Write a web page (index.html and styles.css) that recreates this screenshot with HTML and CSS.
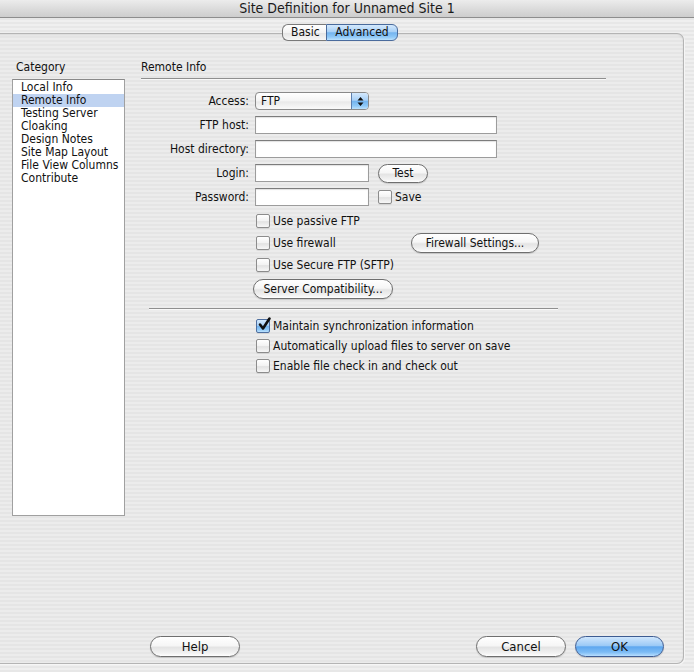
FILE: index.html
```html
<!DOCTYPE html>
<html>
<head>
<meta charset="utf-8">
<title>Site Definition for Unnamed Site 1</title>
<link rel="stylesheet" href="styles.css">
</head>
<body>
<div class="window">
  <div class="titlebar">Site Definition for Unnamed Site 1</div>
  <div class="tabs">
    <span class="tab tab-left">Basic</span><span class="tab tab-right selected">Advanced</span>
  </div>
  <div class="group">
    <div class="columns">
      <div class="left-col">
        <div class="col-label">Category</div>
        <ul class="list">
          <li>Local Info</li>
          <li class="sel">Remote Info</li>
          <li>Testing Server</li>
          <li>Cloaking</li>
          <li>Design Notes</li>
          <li>Site Map Layout</li>
          <li>File View Columns</li>
          <li>Contribute</li>
        </ul>
      </div>
      <div class="right-col">
        <div class="heading">Remote Info</div>
        <div class="sep sep-head"></div>

        <div class="row">
          <span class="lbl">Access:</span>
          <div class="popup"><span class="popup-text">FTP</span><span class="stepper"><svg width="7" height="11" viewBox="0 0 7 11"><path d="M3.5 1 L6.5 4.5 L0.5 4.5 Z M3.5 10 L0.5 6.5 L6.5 6.5 Z" fill="#111"/></svg></span></div>
        </div>
        <div class="row">
          <span class="lbl">FTP host:</span>
          <input class="field wide" type="text">
        </div>
        <div class="row">
          <span class="lbl">Host directory:</span>
          <input class="field wide" type="text">
        </div>
        <div class="row">
          <span class="lbl">Login:</span>
          <input class="field narrow" type="text">
          <span class="btn btn-test">Test</span>
        </div>
        <div class="row">
          <span class="lbl">Password:</span>
          <input class="field narrow" type="password">
          <span class="chk chk-save"></span><span class="chk-text">Save</span>
        </div>

        <div class="opts">
          <div class="opt"><span class="chk"></span><span class="chk-text">Use passive FTP</span></div>
          <div class="opt"><span class="chk"></span><span class="chk-text opt-fixed">Use firewall</span><span class="btn btn-firewall">Firewall Settings...</span></div>
          <div class="opt"><span class="chk"></span><span class="chk-text">Use Secure FTP (SFTP)</span></div>
        </div>
        <span class="btn btn-compat">Server Compatibility...</span>

        <div class="sep sep-mid"></div>

        <div class="sync">
          <div class="sync-opt"><span class="chk checked"><svg width="14" height="14" viewBox="0 0 14 14"><path d="M3 6.5 L6 10.5 L12.5 0.5" fill="none" stroke="#101010" stroke-width="2.6" stroke-linecap="round" stroke-linejoin="round"/></svg></span><span class="chk-text">Maintain synchronization information</span></div>
          <div class="sync-opt"><span class="chk"></span><span class="chk-text">Automatically upload files to server on save</span></div>
          <div class="sync-opt"><span class="chk"></span><span class="chk-text">Enable file check in and check out</span></div>
        </div>
      </div>
    </div>
    <div class="footer">
      <span class="btn btn-big">Help</span>
      <span class="footer-right">
        <span class="btn btn-big">Cancel</span>
        <span class="btn btn-big btn-default">OK</span>
      </span>
    </div>
  </div>
</div>
</body>
</html>
```
FILE: styles.css
```css
html, body {
  margin: 0;
  padding: 0;
}
body {
  width: 694px;
  height: 672px;
  overflow: hidden;
  font-family: "DejaVu Sans Condensed", "DejaVu Sans", sans-serif;
  font-size: 12px;
  color: #111;
  background: repeating-linear-gradient(to bottom, #efefef 0, #efefef 2px, #e7e7e7 2px, #e7e7e7 4px);
}
.window {
  display: flex;
  flex-direction: column;
  height: 672px;
}
.titlebar {
  height: 17px;
  line-height: 16px;
  text-align: center;
  font-size: 14px;
  color: #1a1a1a;
  background: linear-gradient(to bottom, #ececec, #d9d9d9 60%, #cdcdcd);
  border-bottom: 1px solid #8d8d8d;
}
.tabs {
  position: relative;
  z-index: 2;
  display: flex;
  justify-content: center;
  margin: 6px 0 -8px -4px;
  width: 688px;
}
.tab {
  height: 15px;
  line-height: 15px;
  padding: 0 8px;
  border: 1px solid #7a7a7a;
  font-size: 12px;
}
.tab-left {
  width: 27px;
  border-right: none;
  border-radius: 6px 0 0 6px;
  background: linear-gradient(to bottom, #ffffff, #f3f3f3 50%, #e4e4e4 52%, #f6f6f6);
  text-align: center;
}
.tab-right {
  width: 54px;
  border-radius: 0 6px 6px 0;
  text-align: center;
}
.tab.selected {
  border-color: #4a6b9c;
  background: linear-gradient(to bottom, #d4e9fd, #a8d0f6 45%, #74b4ef 52%, #8ec8f7 80%, #bde2fe);
}
.group {
  flex: 1;
  display: flex;
  flex-direction: column;
  margin: 0 10px 8px -4px;
  border: 1px solid #b4b4b4;
  border-left: none;
  border-radius: 0 7px 7px 0;
  box-shadow: inset 0 1px 2px rgba(0,0,0,0.08), 1px 1px 0 #f6f6f6;
  background: repeating-linear-gradient(to bottom, #ececec 0, #ececec 2px, #e5e5e5 2px, #e5e5e5 4px);
}
.columns {
  display: flex;
  padding-top: 26px;
  padding-left: 16px;
}
.left-col {
  width: 113px;
}
.col-label, .heading {
  height: 14px;
  line-height: 14px;
}
.col-label {
  padding-left: 4px;
}
.list {
  list-style: none;
  margin: 5px 0 0;
  padding: 1px 0 0;
  height: 434px;
  background: #fff;
  border: 1px solid #a0a0a0;
  border-top-color: #8a8a8a;
}
.list li {
  height: 13px;
  line-height: 13px;
  padding-left: 8px;
  white-space: nowrap;
}
.list li.sel {
  background: #bfd3f1;
}
.right-col {
  margin-left: 16px;
  width: 470px;
}
.sep {
  height: 1px;
  background: #8f8f8f;
  border-bottom: 1px solid #f8f8f8;
}
.sep-head {
  width: 465px;
  margin-top: 4px;
  margin-bottom: 12px;
}
.row {
  display: flex;
  align-items: center;
  height: 18px;
  margin-bottom: 6px;
}
.lbl {
  width: 108px;
  margin-right: 6px;
  text-align: right;
  white-space: nowrap;
}
.field {
  box-sizing: border-box;
  height: 18px;
  margin: 0;
  padding: 0 3px;
  border: 1px solid #9c9c9c;
  border-top-color: #7c7c7c;
  box-shadow: inset 0 1px 1px rgba(0,0,0,0.12);
  background: #fff;
  outline: none;
  font: inherit;
}
.field.wide { width: 242px; }
.field.narrow { width: 114px; }
.popup {
  box-sizing: border-box;
  display: flex;
  align-items: center;
  width: 114px;
  height: 18px;
  border: 1px solid #8a8a8a;
  border-radius: 4px;
  background: linear-gradient(to bottom, #ffffff, #f4f4f4 50%, #e9e9e9 55%, #fafafa);
  overflow: hidden;
}
.popup-text {
  flex: 1;
  padding-left: 5px;
  line-height: 16px;
}
.stepper {
  display: flex;
  align-items: center;
  justify-content: center;
  width: 16px;
  height: 16px;
  border-left: 1px solid #5d7fae;
  background: linear-gradient(to bottom, #d4e9fd, #a8d0f6 45%, #74b4ef 52%, #8ec8f7 80%, #bde2fe);
}
.btn {
  box-sizing: border-box;
  display: inline-flex;
  align-items: center;
  justify-content: center;
  border: 1px solid #6f6f6f;
  border-radius: 11px;
  background: linear-gradient(to bottom, #ffffff, #f6f6f6 45%, #e4e4e4 55%, #f2f2f2 85%, #ffffff);
  box-shadow: 0 1px 1px rgba(0,0,0,0.15);
  white-space: nowrap;
}
.btn-test {
  width: 50px;
  height: 19px;
  margin-left: 9px;
}
.chk {
  box-sizing: border-box;
  display: inline-flex;
  flex: none;
  width: 14px;
  height: 14px;
  border: 1px solid #8c8c8c;
  border-radius: 2px;
  background: linear-gradient(to bottom, #ffffff, #f2f2f2 50%, #e2e2e2 55%, #f7f7f7);
  box-shadow: 0 1px 0 rgba(0,0,0,0.08);
}
.chk.checked {
  border-color: #4f6f9f;
  background: linear-gradient(to bottom, #d4e9fd, #a8d0f6 45%, #74b4ef 52%, #8ec8f7 80%, #bde2fe);
  overflow: visible;
}
.chk.checked svg {
  margin: -2px 0 0 0;
  overflow: visible;
}
.chk-save {
  margin-left: 9px;
}
.chk-text {
  margin-left: 3px;
  white-space: nowrap;
}
.opts {
  margin-top: -2px;
  padding-left: 115px;
}
.opt {
  display: flex;
  align-items: center;
  height: 22px;
}
.opt-fixed {
  width: 138px;
}
.btn-firewall {
  width: 128px;
  height: 20px;
}
.btn-compat {
  width: 140px;
  height: 20px;
  margin: 3px 0 0 112px;
}
.sep-mid {
  width: 409px;
  margin: 9px 0 0 8px;
}
.sync {
  margin-top: 6px;
  padding-left: 115px;
}
.sync-opt {
  display: flex;
  align-items: center;
  height: 20px;
}
.footer {
  margin-top: auto;
  display: flex;
  align-items: center;
  padding: 0 19px 6px 154px;
}
.footer-right {
  margin-left: auto;
  display: flex;
  gap: 9px;
}
.btn-big {
  width: 90px;
  height: 21px;
  font-size: 13px;
}
.btn-default {
  width: 89px;
  border-color: #3e5c92;
  background: linear-gradient(to bottom, #cfe6fd, #9ccaf6 45%, #5ea7ef 52%, #7dbcf5 80%, #b8defe);
}
```
